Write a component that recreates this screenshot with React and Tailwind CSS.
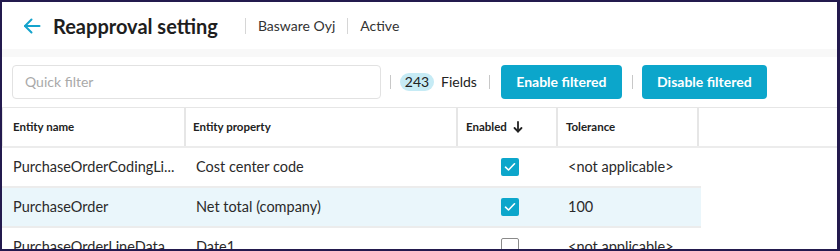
import { useState } from "react";

// ── Icons ──────────────────────────────────────────────────────────────────────

function BackArrow() {
  return (
    <svg width="18" height="16" viewBox="0 0 18 16" fill="none" stroke="#14a3cc" strokeWidth="2" strokeLinecap="round" strokeLinejoin="round">
      <line x1="2" y1="8" x2="16.5" y2="8" />
      <polyline points="8.5,1.5 2,8 8.5,14.5" />
    </svg>
  );
}

function SortDown() {
  return (
    <svg width="10" height="12" viewBox="0 0 10 12" fill="none" stroke="#222" strokeWidth="1.8" strokeLinecap="round" strokeLinejoin="round">
      <line x1="5" y1="1" x2="5" y2="10.5" />
      <polyline points="1.5,7 5,10.5 8.5,7" />
    </svg>
  );
}

function Checkbox({ checked }) {
  if (!checked) {
    return <span className="block w-[18px] h-[18px] rounded-[2px] border border-[#8a8a8a] bg-white" />;
  }
  return (
    <span className="flex items-center justify-center w-[18px] h-[18px] rounded-[2px] bg-[#0ca6cb]">
      <svg width="12" height="10" viewBox="0 0 12 10" fill="none" stroke="white" strokeWidth="1.6" strokeLinecap="round" strokeLinejoin="round">
        <polyline points="1.5,5.2 4.5,8 10.5,1.8" />
      </svg>
    </span>
  );
}

function Sep() {
  return <span className="block w-px h-[14px] bg-[#c8c8c8]" />;
}

// ── Data ───────────────────────────────────────────────────────────────────────

const ROWS = [
  { entity: "PurchaseOrderCodingLi...", property: "Cost center code", enabled: true, tolerance: "<not applicable>" },
  { entity: "PurchaseOrder", property: "Net total (company)", enabled: true, tolerance: "100" },
  { entity: "PurchaseOrderLineData", property: "Date1", enabled: false, tolerance: "<not applicable>" },
];

// ── Page ───────────────────────────────────────────────────────────────────────

export default function App() {
  const [selected] = useState(1);

  return (
    <div
      className="h-[251px] overflow-hidden bg-white border-2 border-r-[3px] border-[#231a4e] text-[#222]"
      style={{ fontFamily: 'Lato, "Noto Sans", sans-serif' }}
    >
      {/* Header */}
      <div className="h-[47px] flex items-center pl-[21px]">
        <BackArrow />
        <h1 className="ml-[12px] text-[20px] font-bold leading-none text-[#1e1e1e]">
          Reapproval setting
        </h1>
        <span className="ml-[27px] w-px h-[16px] bg-[#d6d6d6]" />
        <span className="ml-[12px] text-[14px] text-[#333]">Basware Oyj</span>
        <span className="ml-[12px] w-px h-[16px] bg-[#d6d6d6]" />
        <span className="ml-[12px] text-[14px] text-[#333]">Active</span>
      </div>

      <div className="h-2 bg-[#f8f8f8]" />

      {/* Toolbar */}
      <div className="flex items-center h-[50px] pl-[10px] pb-[1px]">
        <div className="w-[369px] h-[34px] flex items-center px-3 rounded-[4px] border border-[#e2e2e2] bg-white">
          <span className="text-[14px] text-[#a9a9a9]">Quick filter</span>
        </div>
        <span className="ml-[9px]"><Sep /></span>
        <span className="ml-[9px] w-[34px] h-[18px] flex items-center justify-center rounded-full bg-[#c6ebf5] text-[14px] text-[#222]">243</span>
        <span className="ml-[7px] text-[14px] text-[#222]">Fields</span>
        <span className="ml-[12px]"><Sep /></span>
        <button className="ml-[11px] w-[121px] h-[34px] rounded-[4px] bg-[#0ca6cb] text-white text-[14px] font-bold">
          Enable filtered
        </button>
        <span className="ml-[10px]"><Sep /></span>
        <button className="ml-[9px] w-[125px] h-[34px] rounded-[4px] bg-[#0ca6cb] text-white text-[14px] font-bold">
          Disable filtered
        </button>
      </div>

      {/* Table */}
      <div className="border-t border-[#e6e6e6]">
        <div className="flex h-[40px] border-b-2 border-[#ececec] text-[11.5px] font-bold text-[#222]">
          <div className="w-[184px] flex items-center pl-[10px] border-l border-r-2 border-[#e6e6e6]">Entity name</div>
          <div className="w-[272px] flex items-center pl-[7px] border-r-2 border-[#e6e6e6]">Entity property</div>
          <div className="w-[100px] flex items-center gap-[6px] pl-[8px] border-r-2 border-[#e6e6e6]">
            Enabled <SortDown />
          </div>
          <div className="w-[141px] flex items-center pl-[8px] border-r-2 border-[#e6e6e6]">Tolerance</div>
          <div className="flex-1" />
        </div>

        {ROWS.map((row, i) => (
          <div
            key={row.entity}
            className={`w-[699px] flex h-[40px] border-b-2 border-[#ececec] text-[14.5px] text-[#2a2a2a] ${i === selected ? "bg-[#eaf6fb]" : "bg-white"}`}
          >
            <div className="w-[184px] flex items-center pl-[10px] pr-2 ml-px whitespace-nowrap">
              {row.entity}
            </div>
            <div className="w-[272px] flex items-center pl-[9px]">{row.property}</div>
            <div className="w-[100px] flex items-center justify-center pl-[2px]">
              <Checkbox checked={row.enabled} />
            </div>
            <div className="w-[141px] flex items-center pl-[9px]">{row.tolerance}</div>
          </div>
        ))}
      </div>
    </div>
  );
}
